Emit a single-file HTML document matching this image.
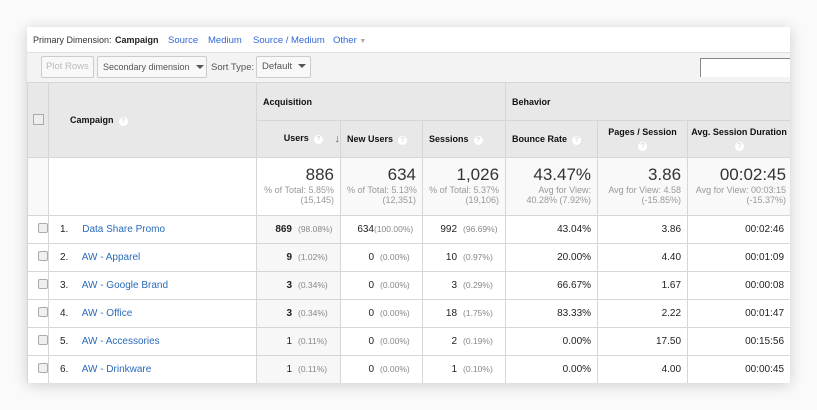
<!DOCTYPE html><html><head><style>
body{margin:0;width:817px;height:410px;background:#fafafa;font-family:"Liberation Sans",sans-serif;position:relative;overflow:hidden}
.card{position:absolute;left:27px;top:27px;width:763px;height:356px;background:#fff;box-shadow:0 2px 14px rgba(0,0,0,.18);overflow:hidden}
.dim{height:25px;font-size:9.5px;color:#333;position:relative}
.dim>span{position:absolute;top:8px;white-space:nowrap}
.dim .l{color:#3367d6}
.tb{height:29px;background:#f3f3f3;border-top:1px solid #e0e0e0;border-bottom:1px solid #ccc;position:relative;font-size:9.5px;color:#555}
.btn{position:absolute;top:3px;border:1px solid #ccc;border-radius:2px;background:#f8f8f8;line-height:20px;padding:0 5px;box-sizing:border-box;height:22px;white-space:nowrap}
.car{display:inline-block;width:0;height:0;border-left:4px solid transparent;border-right:4px solid transparent;border-top:4px solid #555;margin-left:6px;vertical-align:1px}
table{position:absolute;left:0;top:55px;width:763px;border-collapse:collapse;table-layout:fixed;font-size:10px;color:#222}
td{border:1px solid #d6d6d6;padding:0 6px;white-space:nowrap;overflow:hidden}
td:first-child{padding:0;text-align:center}
.h td{background:#e8e8e8;font-weight:bold;font-size:9px;color:#111}
.q{display:inline-block;width:9px;height:9px;border-radius:50%;background:#fff;color:#ccc;font-size:7px;text-align:center;line-height:9px;margin-left:5px;font-weight:normal;vertical-align:0}
.tot td{background:#f9f9f9;text-align:right;vertical-align:top;padding-top:8px;color:#999;font-size:9px;line-height:10px}
.tot b{display:block;font-weight:normal;font-size:17px;color:#333;line-height:18px;margin-bottom:1px}
.r td{height:27px;text-align:right}
.r td.u{background:#f7f7f7}
.p{color:#888;font-size:8.5px;display:inline-block;width:36px;text-align:left;margin-left:6px}
.cb{display:inline-block;width:8px;height:8px;border:1px solid #aaa;border-radius:2px;background:#f0f0f0}
a{color:#2a6bb8;text-decoration:none}
</style></head><body>
<div class="card">
<div class="dim"><span style="left:6px;font-size:9px">Primary Dimension:</span><span style="left:88px;color:#222;font-weight:bold;font-size:9px">Campaign</span><span class="l" style="left:141px">Source</span><span class="l" style="left:181px">Medium</span><span class="l" style="left:226px">Source / Medium</span><span class="l" style="left:306px">Other <span style="color:#aaa;font-size:7px">▼</span></span></div>
<div class="tb">
<div class="btn" style="left:14px;color:#bbb;width:53px;padding:0 4px">Plot Rows</div>
<div class="btn" style="left:70px;width:110px;font-size:9px">Secondary dimension<span class="car"></span></div>
<span style="position:absolute;left:184px;top:9px">Sort Type:</span>
<div class="btn" style="left:229px;width:55px">Default<span class="car"></span></div>
<div style="position:absolute;left:673px;top:5px;width:95px;height:18px;background:#fff;border-top:1px solid #888;border-left:1px solid #888"></div>
</div>
<table>
<colgroup><col style="width:21px"><col style="width:208px"><col style="width:84px"><col style="width:82px"><col style="width:83px"><col style="width:92px"><col style="width:90px"><col style="width:103px"></colgroup>
<tr class="h" style="height:38px"><td rowspan="2"><span class="cb" style="background:#eee;width:9px;height:9px;border-radius:0"></span></td><td rowspan="2" style="padding-left:21px">Campaign<span class="q">?</span></td><td colspan="3">Acquisition</td><td colspan="3">Behavior</td></tr>
<tr class="h" style="height:37px"><td style="padding-left:15px">Users<span class="q">?</span><span style="float:right;color:#666;font-size:11px">↓</span></td><td>New Users<span class="q">?</span></td><td>Sessions<span class="q">?</span></td><td>Bounce Rate<span class="q">?</span></td><td style="text-align:center;white-space:normal;line-height:13px">Pages / Session<br><span class="q" style="margin:0">?</span></td><td style="text-align:center;white-space:normal;line-height:13px;padding:0 2px">Avg. Session Duration<br><span class="q" style="margin:0">?</span></td></tr>
<tr class="tot" style="height:58px"><td style="background:#f9f9f9"></td><td style="background:#fff"></td><td style="background:#fff"><b>886</b>% of Total: 5.85%<br>(15,145)</td><td><b>634</b>% of Total: 5.13%<br>(12,351)</td><td><b>1,026</b>% of Total: 5.37%<br>(19,106)</td><td><b>43.47%</b>Avg for View:<br>40.28% (7.92%)</td><td><b>3.86</b>Avg for View: 4.58<br>(-15.85%)</td><td style="padding-right:4px"><b>00:02:45</b>Avg for View: 00:03:15<br>(-15.37%)</td></tr>
<tr class="r"><td><span class="cb"></span></td><td style="text-align:left;padding-left:11px">1.&nbsp;&nbsp;&nbsp;&nbsp; <a>Data Share Promo</a></td><td class="u"><b>869</b><span class="p">(98.08%)</span></td><td>634<span class="p" style="margin-left:0;width:42px">(100.00%)</span></td><td>992<span class="p">(96.69%)</span></td><td>43.04%</td><td>3.86</td><td>00:02:46</td></tr>
<tr class="r"><td><span class="cb"></span></td><td style="text-align:left;padding-left:11px">2.&nbsp;&nbsp;&nbsp;&nbsp; <a>AW - Apparel</a></td><td class="u"><b>9</b><span class="p">(1.02%)</span></td><td>0<span class="p">(0.00%)</span></td><td>10<span class="p">(0.97%)</span></td><td>20.00%</td><td>4.40</td><td>00:01:09</td></tr>
<tr class="r"><td><span class="cb"></span></td><td style="text-align:left;padding-left:11px">3.&nbsp;&nbsp;&nbsp;&nbsp; <a>AW - Google Brand</a></td><td class="u"><b>3</b><span class="p">(0.34%)</span></td><td>0<span class="p">(0.00%)</span></td><td>3<span class="p">(0.29%)</span></td><td>66.67%</td><td>1.67</td><td>00:00:08</td></tr>
<tr class="r"><td><span class="cb"></span></td><td style="text-align:left;padding-left:11px">4.&nbsp;&nbsp;&nbsp;&nbsp; <a>AW - Office</a></td><td class="u"><b>3</b><span class="p">(0.34%)</span></td><td>0<span class="p">(0.00%)</span></td><td>18<span class="p">(1.75%)</span></td><td>83.33%</td><td>2.22</td><td>00:01:47</td></tr>
<tr class="r"><td><span class="cb"></span></td><td style="text-align:left;padding-left:11px">5.&nbsp;&nbsp;&nbsp;&nbsp; <a>AW - Accessories</a></td><td class="u">1<span class="p">(0.11%)</span></td><td>0<span class="p">(0.00%)</span></td><td>2<span class="p">(0.19%)</span></td><td>0.00%</td><td>17.50</td><td>00:15:56</td></tr>
<tr class="r"><td><span class="cb"></span></td><td style="text-align:left;padding-left:11px">6.&nbsp;&nbsp;&nbsp;&nbsp; <a>AW - Drinkware</a></td><td class="u">1<span class="p">(0.11%)</span></td><td>0<span class="p">(0.00%)</span></td><td>1<span class="p">(0.10%)</span></td><td>0.00%</td><td>4.00</td><td>00:00:45</td></tr>
</table>
</div>
</body></html>
